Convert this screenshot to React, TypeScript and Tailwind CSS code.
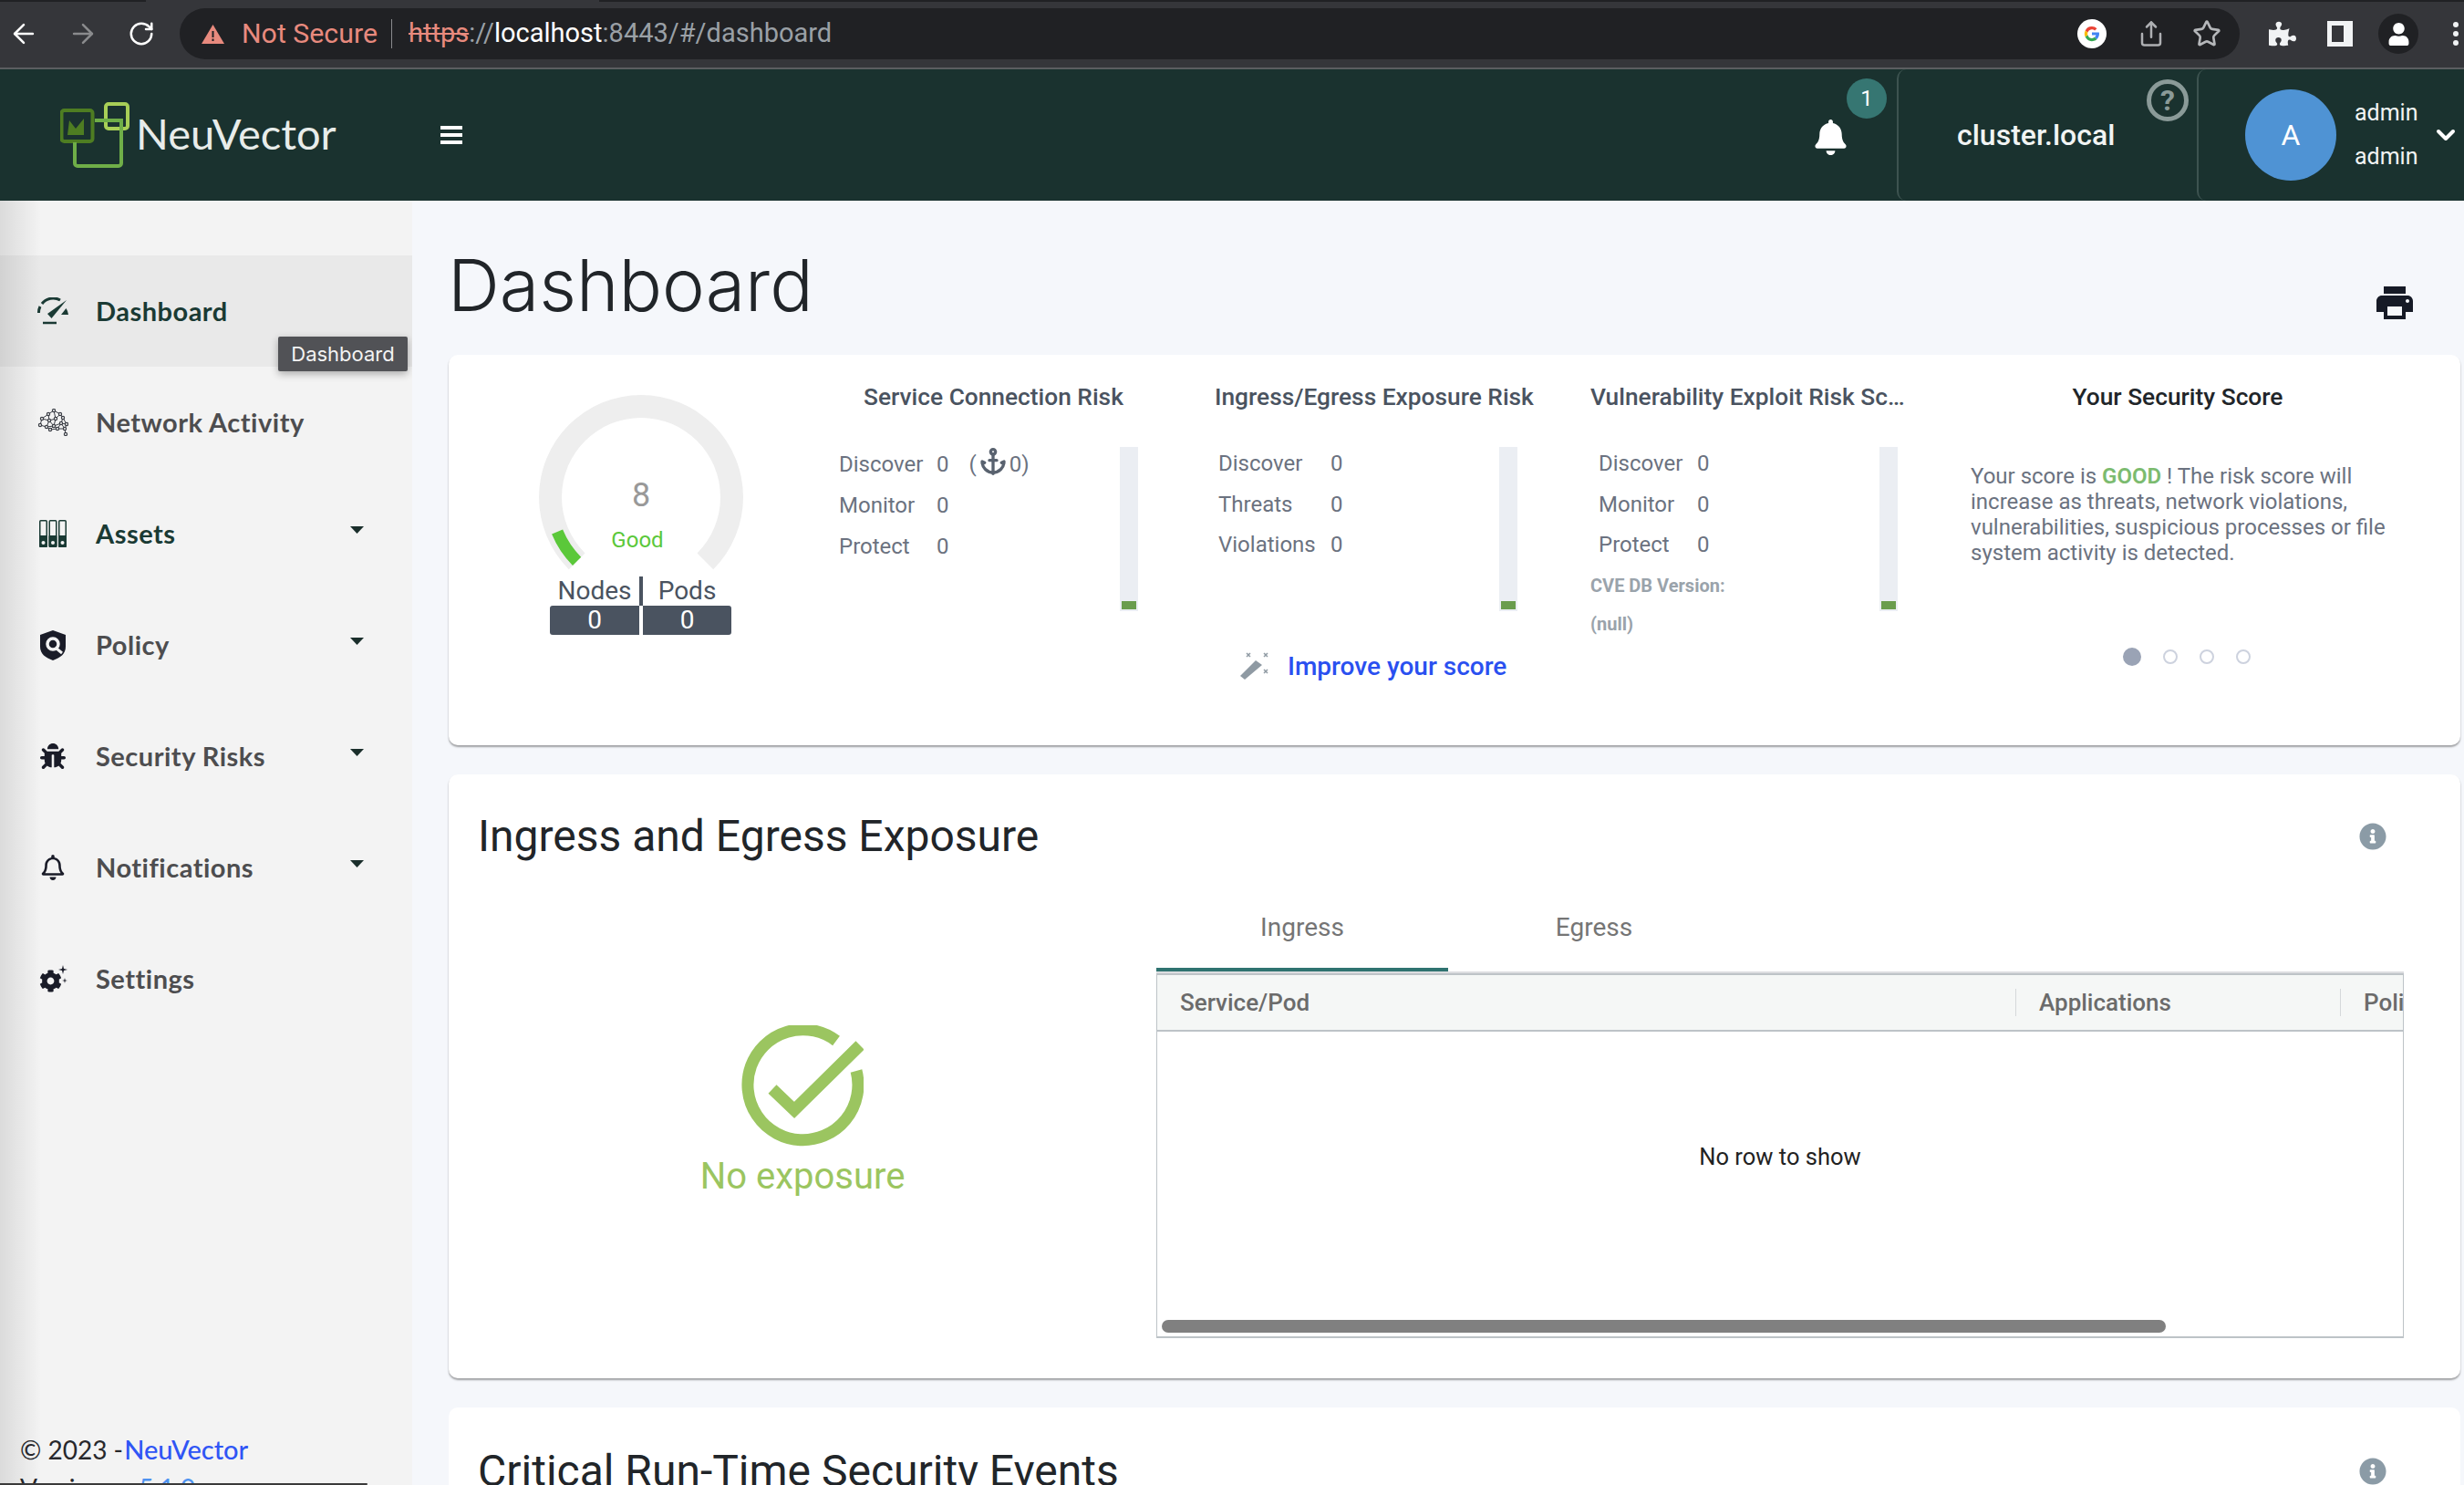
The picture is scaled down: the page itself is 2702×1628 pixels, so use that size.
import { Anchor, ArrowLeft, ArrowRight, RotateCw, Share, Star, ChevronDown } from "lucide-react";
import { FaBell, FaBug, FaCog, FaInfoCircle, FaPuzzlePiece, FaRegBell, FaUser } from "react-icons/fa";
import type { ReactNode } from "react";

function Caret() {
  return (
    <svg width="15" height="8" viewBox="0 0 15 8" className="ml-auto mr-[53px] mb-[8px]">
      <path d="M0 0h15L7.5 8z" fill="#1a2e2b" />
    </svg>
  );
}

function GaugeIcon() {
  return (
    <svg width="34" height="30" viewBox="0 0 34 30" fill="none">
      <path d="M1.500 17A15.500 15.500 0 0 1 3 10M5 7A15.500 15.500 0 0 1 25 3" stroke="#1a3a34" strokeWidth="3" />
      <path d="M32 3L15.500 23L11 18z" fill="#1a3a34" />
      <path d="M26 19h8a16 16 0 0 0-2.500-7z" fill="#1a3a34" />
      <path d="M6 28h15" stroke="#1a3a34" strokeWidth="2.500" />
    </svg>
  );
}

function BrainIcon() {
  const dots = [[12, 6], [18, 2], [25, 6], [5, 11], [13, 13], [20, 11], [28, 10], [3, 18], [10, 20], [18, 19], [26, 16], [32, 17], [14, 23], [22, 22], [30, 22], [31, 28]];
  return (
    <svg width="34" height="30" viewBox="0 0 34 30" fill="none" stroke="#3a3d45" strokeWidth="1">
      <path d="M12 6L18 2L25 6L28 10L32 17L30 22L31 28M12 6L5 11L3 18L10 20L14 23L22 22L30 22M12 6L13 13L10 20M18 2L20 11L18 19L14 23M25 6L20 11L13 13L5 11M28 10L26 16L18 19L10 20M26 16L32 17M26 16L30 22M13 13L18 19L22 22L26 16" />
      {dots.map(([x, y]) => (
        <circle key={`${x}-${y}`} cx={x} cy={y} r="1.6" fill="#f3f3f3" strokeWidth="1.2" />
      ))}
    </svg>
  );
}

function BindersIcon() {
  return (
    <svg width="30" height="30" viewBox="0 0 30 30">
      {[0, 10.5, 21].map((x) => (
        <g key={x}>
          <rect x={x + 0.75} y="0.75" width="7.5" height="28.5" rx="1" fill="none" stroke="#1a3a34" strokeWidth="1.5" />
          <rect x={x} y="17" width="9" height="13" rx="1" fill="#1a3a34" />
          <circle cx={x + 4.5} cy="25" r="2" fill="#f3f3f3" />
        </g>
      ))}
    </svg>
  );
}

function ShieldIcon() {
  return (
    <svg width="28" height="33" viewBox="0 0 28 33">
      <path d="M14 0L28 5v13c0 8-6 12-14 15C6 30 0 26 0 18V5z" fill="#1a1c28" />
      <circle cx="14" cy="15" r="6" fill="none" stroke="#f3f3f3" strokeWidth="3.5" />
      <path d="M18 20l6 5" stroke="#f3f3f3" strokeWidth="3" />
    </svg>
  );
}

function GearIcon() {
  return (
    <div className="relative w-[31px] h-[30px] text-[#1a1c28]">
      <FaCog size={25} className="absolute left-0 bottom-0" />
      <svg width="10" height="10" viewBox="0 0 10 10" className="absolute right-0 top-0" fill="currentColor">
        <path d="M5 0l1 4 4 1-4 1-1 4-1-4-4-1 4-1z" />
      </svg>
      <svg width="6" height="6" viewBox="0 0 10 10" className="absolute right-0 top-[14px]" fill="currentColor">
        <path d="M5 0l1 4 4 1-4 1-1 4-1-4-4-1 4-1z" />
      </svg>
    </div>
  );
}

const menu: { name: string; icon: ReactNode; caret?: boolean; dark?: boolean; active?: boolean }[] = [
  { name: "Dashboard", icon: <GaugeIcon />, dark: true, active: true },
  { name: "Network Activity", icon: <BrainIcon /> },
  { name: "Assets", icon: <BindersIcon />, caret: true, dark: true },
  { name: "Policy", icon: <ShieldIcon />, caret: true },
  { name: "Security Risks", icon: <FaBug size={28} className="text-[#1a1c28]" />, caret: true },
  { name: "Notifications", icon: <FaRegBell size={28} className="text-[#1a1c28]" />, caret: true },
  { name: "Settings", icon: <GearIcon />},
];

function BrowserBar() {
  return (
    <div className="relative h-[76px] bg-[#35363a] border-b-2 border-[#5b5e60] flex items-center shrink-0">
      <div className="absolute top-0 left-0 h-[2px] w-[160px] bg-[#202124]" />
      <div className="absolute top-0 left-[657px] right-0 h-[2px] bg-[#202124]" />
      <ArrowLeft size={34} strokeWidth={1.8} className="text-white ml-[9px]" />
      <ArrowRight size={34} strokeWidth={1.8} className="text-[#8a8b8d] ml-[31px]" />
      <RotateCw size={30} strokeWidth={2} className="text-white ml-[32px]" />
      <div className="ml-[27px] w-[2259px] h-[56px] rounded-full bg-[#202124] flex items-center pl-[24px] text-[29px]">
        <svg width="25" height="21" viewBox="0 0 25 21">
          <path d="M12.5 0L25 21H0z" fill="#e88a7e" />
          <path d="M11.5 7h2v7h-2zM11.5 15.5h2v2.5h-2z" fill="#202124" />
        </svg>
        <span className="ml-[19px] text-[30.300px] text-[#e88a7e]">Not Secure</span>
        <div className="ml-[15px] w-[1px] h-[32px] bg-[#8a8b8d]" />
        <span className="ml-[18px] text-[#e88a7e] line-through">https</span>
        <span className="text-[#9aa0a6]">://</span>
        <span className="text-white">localhost</span>
        <span className="text-[#9aa0a6]">:8443/#/dashboard</span>
        <svg width="32" height="32" viewBox="0 0 32 32" className="ml-auto">
          <circle cx="16" cy="16" r="16" fill="#fff" />
          <path d="M16 8a8 8 0 0 1 5.5 2.2l-2.4 2.4A4.8 4.8 0 0 0 11.400 14.500L8.700 12.400A8 8 0 0 1 16 8z" fill="#ea4335" />
          <path d="M8.700 12.400L11.400 14.500a4.800 4.800 0 0 0 0 3L8.700 19.600a8 8 0 0 1 0-7.200z" fill="#fbbc05" />
          <path d="M11.400 17.500A4.800 4.800 0 0 0 19 19.800l2.500 2.100A8 8 0 0 1 8.700 19.600z" fill="#34a853" />
          <path d="M24 16c0-.6-.1-1.200-.2-1.600H16v3.200h4.500a4 4 0 0 1-1.500 2.200l2.500 2.100C23 20.500 24 18.500 24 16z" fill="#4285f4" />
        </svg>
        <Share size={30} strokeWidth={2} className="text-[#aeb0b3] ml-[34px]" />
        <Star size={32} strokeWidth={2} className="text-[#b5b7ba] ml-[30px] mr-[20px]" />
      </div>
      <FaPuzzlePiece size={30} className="text-[#f1f3f4] ml-[32px]" />
      <div className="ml-[34px] w-[28px] h-[28px] border-[5px] border-[#f1f3f4] border-r-[10px]" />
      <div className="ml-[28px] w-[44px] h-[44px] rounded-full bg-[#202124] flex items-center justify-center">
        <FaUser size={25} className="text-white" />
      </div>
      <div className="ml-[38px] flex flex-col gap-[4px]">
        <div className="w-[6px] h-[6px] rounded-full bg-[#f1f3f4]" />
        <div className="w-[6px] h-[6px] rounded-full bg-[#f1f3f4]" />
        <div className="w-[6px] h-[6px] rounded-full bg-[#f1f3f4]" />
      </div>
    </div>
  );
}

function AppHeader() {
  return (
    <header className="h-[144px] bg-[#1a322f] flex items-center shrink-0 text-white">
      <svg width="78" height="72" viewBox="0 0 78 72" fill="none" className="ml-[66px]">
        <rect x="1.500" y="9" width="34" height="34" rx="3" stroke="#4e7d22" strokeWidth="4" />
        <path d="M10 20l7 9 9-11v18H8z" fill="#4e7d22" />
        <rect x="50" y="2" width="24" height="27" rx="3" stroke="#a8cf57" strokeWidth="4" />
        <path d="M38 20h29v47a3 3 0 0 1-3 3H19a3 3 0 0 1-3-3V44" stroke="#6fae48" strokeWidth="4" />
      </svg>
      <span className="ml-[5px] mb-[3px] w-[224px] text-[47px] font-[family-name:Lato,sans-serif] text-[#e8ecea]">NeuVector</span>
      <div className="ml-[110px] w-[24px] flex flex-col gap-[4px]">
        <div className="h-[4px] bg-white" />
        <div className="h-[4px] bg-white" />
        <div className="h-[4px] bg-white" />
      </div>
      <div className="ml-auto relative w-[89px] h-full">
        <FaBell size={39} className="absolute -left-[3px] top-[55px]" />
        <div className="absolute left-[34px] top-[10px] w-[44px] h-[44px] rounded-full bg-[#367672] flex items-center justify-center text-[24px]">1</div>
      </div>
      <div className="relative w-[329px] h-full border-l-2 border-[#3d5350] rounded-l-[10px] flex items-center">
        <span className="ml-[64px] text-[32px] font-medium text-[#f1f4f3]">cluster.local</span>
        <div className="absolute right-[9px] top-[11px] w-[46px] h-[46px] rounded-full border-[5px] border-[#8a9a98] flex items-center justify-center text-[32px] font-bold text-[#8a9a98]">?</div>
      </div>
      <div className="w-[293px] h-full border-l-2 border-[#3d5350] rounded-l-[10px] flex items-center">
        <div className="ml-[51px] w-[100px] h-[100px] rounded-full bg-[#4f93d4] flex items-center justify-center text-[32px]">A</div>
        <div className="ml-[20px] text-[25px] leading-[48px] text-[#f1f4f3]">
          <div>admin</div>
          <div>admin</div>
        </div>
        <ChevronDown size={32} strokeWidth={3} className="ml-[14px]" />
      </div>
    </header>
  );
}

function Sidebar() {
  return (
    <aside className="relative w-[452px] shrink-0 bg-[#f3f3f3] pt-[60px] overflow-hidden font-[family-name:Lato,sans-serif]">
      <div className="absolute inset-y-0 left-0 w-[45px] bg-gradient-to-r from-black/10 to-transparent pointer-events-none z-10" />
      {menu.map((item) => (
        <div key={item.name} className={`relative flex items-center h-[122px] ${item.active ? "bg-[#e9e9e9]" : ""}`}>
          <div className="ml-[41px] w-[34px] flex justify-center">{item.icon}</div>
          <span className={`ml-[30px] text-[29px] font-bold tracking-[0.5px] ${item.dark ? "text-[#1a3a34]" : "text-[#4d4d4f]"}`}>{item.name}</span>
          {item.caret && <Caret />}
          {item.active && (
            <div className="absolute right-[5px] -bottom-[5px] z-20 w-[142px] h-[38px] rounded-[2px] bg-[#515256] shadow-[0_3px_8px_rgba(0,0,0,0.3)] flex items-center justify-center text-[22px] text-[#f3f3f3] font-[family-name:Inter,sans-serif]">
              Dashboard
            </div>
          )}
        </div>
      ))}
      <div className="ml-[22px] mt-[434px] text-[28px] leading-[42px] text-[#27282c]">
        <div>© 2023 - <span className="-ml-[6px] text-[29px] font-medium text-[#2f55f5]">NeuVector</span></div>
        <div>Version: <span className="ml-[24px] text-[#4f93f0]">5.1.0</span></div>
      </div>
    </aside>
  );
}

function Bar() {
  return (
    <div className="w-[20px] h-[180px] bg-[#ebeef3] flex flex-col justify-end p-[2px] shrink-0">
      <div className="h-[9px] bg-[#6a9d4d]" />
    </div>
  );
}

function Rows({ rows, labelClass, rowClass }: { rows: [string, ReactNode][]; labelClass: string; rowClass: string }) {
  return (
    <div className="-mt-[4px] text-[24px] text-[#6b7280]">
      {rows.map(([label, value]) => (
        <div key={label} className={`flex items-center ${rowClass}`}>
          <span className={labelClass}>{label}</span>
          {value}
        </div>
      ))}
    </div>
  );
}

function Gauge() {
  return (
    <div className="w-[428px] shrink-0 pt-[44px]">
      <div className="relative ml-[99px] w-[224px] h-[199px]">
        <svg width="224" height="192" viewBox="0 0 224 192" fill="none">
          <path d="M32.800 191.200A112 112 0 1 1 191.200 191.200L173.500 173.500A87 87 0 1 0 50.500 173.500Z" fill="#eeeeee" />
          <path d="M37 187A106 106 0 0 1 14.100 152.600L26.100 147.600A93 93 0 0 0 46.200 177.800Z" fill="#5bc83a" />
        </svg>
        <span className="absolute left-0 w-[224px] top-[88px] text-center text-[36px] leading-[44px] text-[#999999]">8</span>
        <span className="absolute left-[-4px] w-[224px] top-[144px] text-center text-[24px] leading-[30px] text-[#5bc83a]">Good</span>
      </div>
      <div className="ml-[111px] w-[199px] grid grid-cols-[98px_4px_97px] text-[28px] text-[#4a5360] text-center leading-[32px]">
        <span>Nodes</span>
        <div className="bg-[#4a5360]" />
        <span>Pods</span>
        <span className="h-[32px] bg-[#4a5360] text-white rounded-l-[3px]">0</span>
        <div />
        <span className="h-[32px] bg-[#4a5360] text-white rounded-r-[3px]">0</span>
      </div>
    </div>
  );
}

function SummaryCard() {
  return (
    <section className="h-[428px] flex rounded-[10px] bg-white shadow-[0_2px_2px_rgba(0,0,0,0.35)] overflow-hidden">
      <Gauge />
      <div className="w-[412px] shrink-0 pt-[31px]">
        <h3 className="pl-[27px] text-[26.300px] leading-[30px] font-medium text-[#4a5360]">Service Connection Risk</h3>
        <div className="mt-[40px] w-[328px] flex justify-between">
          <Rows
            labelClass="w-[107px]"
            rowClass="h-[45px]"
            rows={[
              ["Discover", <span className="flex items-center">0<span className="ml-[22px] flex items-center">(<Anchor size={32} strokeWidth={2.500} className="mx-[2px] -mt-[6px] text-[#59626f]" />0)</span></span>],
              ["Monitor", "0"],
              ["Protect", "0"],
            ]}
          />
          <Bar />
        </div>
      </div>
      <div className="w-[412px] shrink-0 pt-[31px]">
        <h3 className="text-[26.300px] leading-[30px] font-medium text-[#4a5360]">Ingress/Egress Exposure Risk</h3>
        <div className="mt-[40px] w-[332px] pl-[4px] flex justify-between">
          <Rows labelClass="w-[123px]" rowClass="h-[44.500px]" rows={[["Discover", "0"], ["Threats", "0"], ["Violations", "0"]]} />
          <Bar />
        </div>
        <div className="mt-[45px] pl-[28px] flex items-center">
          <svg width="32" height="32" viewBox="0 0 32 32" fill="#8f9aa3">
            <path d="M0 26L17 9L24 14L5 30z" />
            <path d="M7 1l4 4M11 1L7 5M26 1l4 4M30 1l-4 4M26 19l4 4M30 19l-4 4" stroke="#8f9aa3" strokeWidth="1.500" />
          </svg>
          <span className="ml-[20px] text-[28px] leading-[32px] font-medium text-[#2a50f0]">Improve your score</span>
        </div>
      </div>
      <div className="w-[417px] shrink-0 pt-[31px]">
        <h3 className="w-[350px] truncate text-[26.300px] leading-[30px] font-medium text-[#4a5360]">Vulnerability Exploit Risk Score</h3>
        <div className="mt-[40px] w-[337px] pl-[9px] flex justify-between">
          <div>
            <Rows labelClass="w-[108px]" rowClass="h-[44.500px]" rows={[["Discover", "0"], ["Monitor", "0"], ["Protect", "0"]]} />
            <div className="-ml-[9px] pt-[1px] text-[20px] leading-[42px] font-bold text-[#9aa3ab]">
              <div>CVE DB Version:</div>
              <div>(null)</div>
            </div>
          </div>
          <Bar />
        </div>
      </div>
      <div className="w-[454px] shrink-0 pt-[31px]">
        <h3 className="text-center text-[26.300px] leading-[30px] font-medium text-[#212529]">Your Security Score</h3>
        <p className="mt-[58px] whitespace-nowrap text-[24px] leading-[28px] text-[#6b7280]">
          Your score is <span className="font-semibold text-[#7cbb6f]">GOOD</span> ! The risk score will<br />
          increase as threats, network violations,<br />
          vulnerabilities, suspicious processes or file<br />
          system activity is detected.
        </p>
        <div className="mt-[90px] pl-[167px] flex items-center gap-[24px]">
          <div className="w-[20px] h-[20px] rounded-full bg-[#9aa3b5]" />
          <div className="w-[16px] h-[16px] rounded-full border-2 border-[#cdd2de]" />
          <div className="w-[16px] h-[16px] rounded-full border-2 border-[#cdd2de]" />
          <div className="w-[16px] h-[16px] rounded-full border-2 border-[#cdd2de]" />
        </div>
      </div>
    </section>
  );
}

function CardTitle({ children, className }: { children: ReactNode; className: string }) {
  return (
    <div className={`flex items-center justify-between pl-[32px] pr-[81px] ${className}`}>
      <h2 className="text-[48px] leading-[54px] text-[#212529]">{children}</h2>
      <FaInfoCircle size={30} className="text-[#8b9ba6]" />
    </div>
  );
}

function ExposureCard() {
  return (
    <section className="mt-[32px] h-[662px] rounded-[10px] bg-white shadow-[0_2px_2px_rgba(0,0,0,0.35)]">
      <CardTitle className="pt-[41px]">Ingress and Egress Exposure</CardTitle>
      <div className="flex">
        <div className="w-[776px] shrink-0 pt-[180px] flex flex-col items-center">
          <svg width="134" height="134" viewBox="0 0 134 134" fill="none">
            <path d="M104 17A60.500 60.500 0 1 0 126 50" stroke="#9bc560" strokeWidth="13" />
            <path d="M34 70L58 93L130 22" stroke="#9bc560" strokeWidth="13" />
          </svg>
          <span className="mt-[8px] text-[40px] leading-[48px] text-[#9bc560]">No exposure</span>
        </div>
        <div className="w-[1368px] shrink-0">
          <div className="flex h-[121px]">
            <div className="w-[320px] pt-[29px] border-b-4 border-[#2f7370] flex items-center justify-center text-[28px] text-[#757575]">Ingress</div>
            <div className="w-[320px] pt-[29px] pb-[4px] flex items-center justify-center text-[28px] text-[#757575]">Egress</div>
          </div>
          <div className="border-t-2 border-[#dcdde0]">
            <div className="h-[400px] border-x border-y-2 border-[#bdc3c7] flex flex-col overflow-hidden">
              <div className="h-[62px] shrink-0 bg-[#f5f7f6] border-b-2 border-[#bdc3c7] flex items-center text-[26px] font-medium text-[#6b6b6b] whitespace-nowrap overflow-hidden">
                <span className="w-[941px] shrink-0 pl-[25px]">Service/Pod</span>
                <div className="w-px h-[30px] shrink-0 bg-[#d5d8da]" />
                <span className="w-[355px] shrink-0 pl-[25px]">Applications</span>
                <div className="w-px h-[30px] shrink-0 bg-[#d5d8da]" />
                <span className="pl-[25px] shrink-0">Policy</span>
              </div>
              <div className="flex-1 pb-[42px] flex items-center justify-center text-[25.500px] text-[#222222]">No row to show</div>
              <div className="ml-[5px] mb-[4px] w-[1101px] h-[14px] shrink-0 rounded-full bg-[#808080]" />
            </div>
          </div>
        </div>
      </div>
    </section>
  );
}

export default function App() {
  return (
    <div className="relative w-[2702px] h-[1628px] flex flex-col overflow-hidden bg-[#f5f7fb] font-[family-name:Roboto,sans-serif]">
      <BrowserBar />
      <AppHeader />
      <div className="flex flex-1 min-h-0">
        <Sidebar />
        <main className="flex-1 pl-[40px] pr-[4px] overflow-hidden">
          <div className="h-[169px] flex items-center justify-between pr-[52px] pt-[16px]">
            <h1 className="-ml-[1px] text-[79px] leading-none font-light text-[#212529] font-[family-name:Inter,sans-serif]">Dashboard</h1>
            <svg width="40" height="36" viewBox="2 3 20 18" fill="#161a26" className="mt-[38px]">
              <path d="M19 8H5c-1.660 0-3 1.340-3 3v6h4v4h12v-4h4v-6c0-1.660-1.340-3-3-3zm-3 11H8v-5h8v5zm3-7c-.55 0-1-.45-1-1s.45-1 1-1 1 .45 1 1-.45 1-1 1zm-1-9H6v4h12V3z" />
            </svg>
          </div>
          <SummaryCard />
          <ExposureCard />
          <section className="mt-[32px] h-[200px] rounded-[10px] bg-white">
            <CardTitle className="pt-[43px]">Critical Run-Time Security Events</CardTitle>
          </section>
        </main>
      </div>
      <div className="absolute bottom-0 left-0 w-[403px] h-[2px] rounded-r-full bg-[#3a3a3a] z-20" />
    </div>
  );
}
